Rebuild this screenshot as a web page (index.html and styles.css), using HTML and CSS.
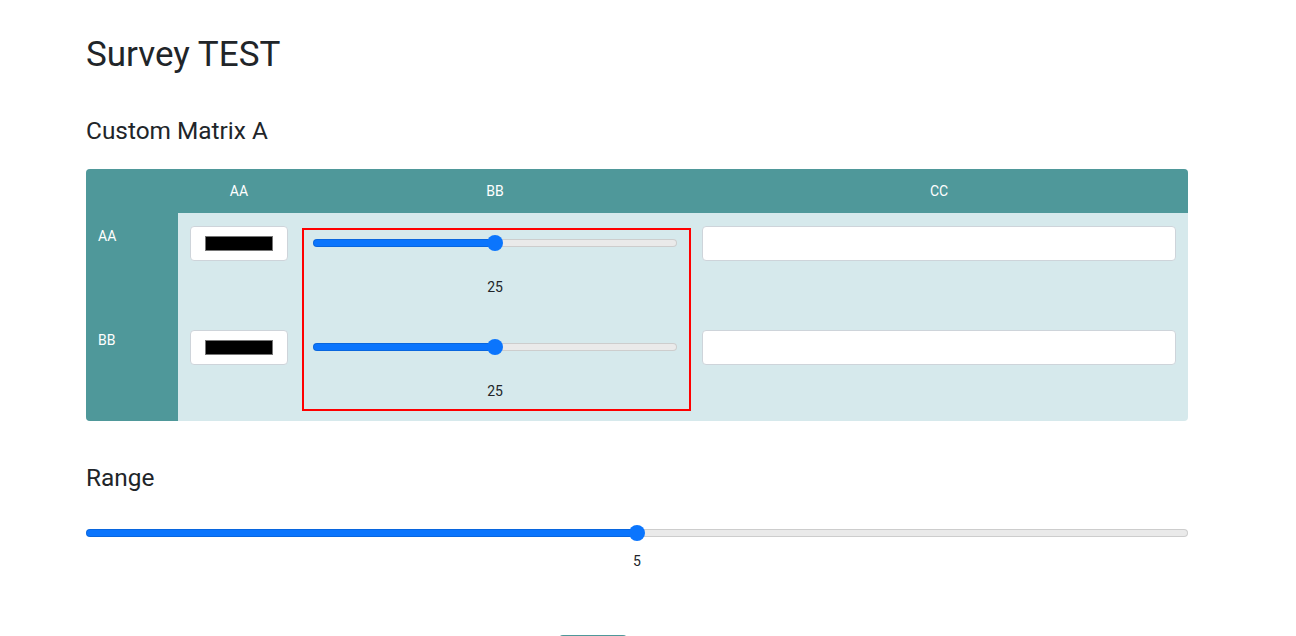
FILE: index.html
```html
<!DOCTYPE html>
<html lang="en">
<head>
<meta charset="utf-8">
<title>Survey TEST</title>
<link rel="stylesheet" href="styles.css">
</head>
<body>
<div class="page">
  <h1 class="title">Survey TEST</h1>

  <h2 class="question-title">Custom Matrix A</h2>
  <div class="matrix">
    <div class="mh corner"></div>
    <div class="mh">AA</div>
    <div class="mh">BB</div>
    <div class="mh">CC</div>

    <div class="row-label">AA</div>
    <div class="cell">
      <input class="color-input" type="color" value="#000000">
    </div>
    <div class="highlight">
      <div class="slider-cell">
        <input class="slider slider-cell-range" type="range" min="0" max="50" value="25" style="--p:50%">
        <div class="slider-value">25</div>
      </div>
      <div class="slider-cell">
        <input class="slider slider-cell-range" type="range" min="0" max="50" value="25" style="--p:50%">
        <div class="slider-value">25</div>
      </div>
    </div>
    <div class="cell">
      <input class="text-input" type="text">
    </div>

    <div class="row-label">BB</div>
    <div class="cell">
      <input class="color-input" type="color" value="#000000">
    </div>
    <div class="cell">
      <input class="text-input" type="text">
    </div>
  </div>

  <h2 class="question-title range-title">Range</h2>
  <input class="slider range-full" type="range" min="0" max="10" value="5" style="--p:50%">
  <div class="range-value">5</div>

  <div class="actions">
    <button class="btn" type="button">Complete</button>
  </div>
</div>
</body>
</html>
```

FILE: styles.css
```css
html {
  overflow-y: scroll;
}

html, body {
  margin: 0;
  padding: 0;
  background: #ffffff;
}

::-webkit-scrollbar {
  width: 15px;
  background: #f1f1f1;
}

::-webkit-scrollbar-track {
  background: #f1f1f1;
}

::-webkit-scrollbar-thumb {
  background: #bcbcbc;
  border: 2px solid #f1f1f1;
  border-top-width: 0;
  border-bottom-width: 0;
  min-height: 40px;
}

::-webkit-scrollbar-button:single-button {
  display: block;
  height: 17px;
  background-color: #f1f1f1;
  background-repeat: no-repeat;
}

::-webkit-scrollbar-button:single-button:vertical:decrement {
  background-image:
    linear-gradient(to top right, transparent 50%, #505050 50%),
    linear-gradient(to top left, transparent 50%, #505050 50%);
  background-size: 4px 4px, 4px 4px;
  background-position: 3.5px 6px, 7.5px 6px;
}

::-webkit-scrollbar-button:single-button:vertical:increment {
  background-image:
    linear-gradient(to bottom right, transparent 50%, #505050 50%),
    linear-gradient(to bottom left, transparent 50%, #505050 50%);
  background-size: 4px 4px, 4px 4px;
  background-position: 3.5px 7px, 7.5px 7px;
}

body {
  font-family: Roboto, "Liberation Sans", Arial, sans-serif;
  font-size: 14px;
  line-height: 21px;
  color: #212529;
}

.page {
  width: 1102px;
  margin-left: 86px;
  min-height: 1300px;
  box-sizing: border-box;
  padding-top: 33px;
}

.title {
  margin: 0;
  font-size: 35px;
  line-height: 43px;
  font-weight: 400;
  color: #212529;
}

.question-title {
  margin: 40px 0 0;
  font-size: 24.4px;
  line-height: 29px;
  font-weight: 400;
  color: #212529;
}

/* Matrix */
.matrix {
  margin-top: 24px;
  display: grid;
  grid-template-columns: 92px 122px 390px 1fr;
  grid-template-rows: 44px 104px 104px;
  background: #d6e9ec;
  border-radius: 4px;
  overflow: hidden;
}

.mh {
  background: #4f989a;
  color: #ffffff;
  display: flex;
  align-items: center;
  justify-content: center;
  font-size: 14px;
}

.row-label {
  background: #4f989a;
  color: #ffffff;
  padding: 13px 12px 0;
}

.cell {
  padding: 13px 12px 0;
}

.highlight {
  grid-column: 3;
  grid-row: 2 / 4;
  margin: 15px -1px 10px 2px;
  border: 2px solid #ff0000;
}

.slider-cell {
  height: 104px;
  padding: 5px 0 0 9px;
  box-sizing: border-box;
}

.slider-cell:last-child {
  height: auto;
}

.slider-value {
  width: 364px;
  margin-top: 26px;
  text-align: center;
}

.color-input {
  -webkit-appearance: none;
  appearance: none;
  display: block;
  width: 98px;
  height: 35px;
  box-sizing: border-box;
  padding: 9px 14px;
  margin: 0;
  background: #ffffff;
  border: 1px solid #ced4da;
  border-radius: 4px;
}

.color-input::-webkit-color-swatch-wrapper {
  padding: 0;
}

.color-input::-webkit-color-swatch {
  border: 1px solid #767676;
  border-radius: 0;
}

.text-input {
  display: block;
  width: 100%;
  height: 35px;
  box-sizing: border-box;
  margin: 0;
  padding: 6px 12px;
  background: #ffffff;
  border: 1px solid #ced4da;
  border-radius: 4px;
  font: inherit;
  outline: none;
}

/* Sliders */
.slider {
  -webkit-appearance: none;
  appearance: none;
  display: block;
  height: 16px;
  margin: 0;
  padding: 0;
  background: transparent;
}

.slider-cell-range {
  width: 364px;
}

.range-title {
  margin-top: 42px;
}

.range-full {
  width: 1102px;
  margin-top: 33px;
}

.slider::-webkit-slider-runnable-track {
  height: 8px;
  border-radius: 4px;
  background: linear-gradient(to right, #0b75fd var(--p), #eaeaea var(--p));
  box-shadow: inset 0 0 0 1px rgba(0, 0, 0, 0.12);
}

.slider::-webkit-slider-thumb {
  -webkit-appearance: none;
  appearance: none;
  width: 16px;
  height: 16px;
  margin-top: -4px;
  border: none;
  border-radius: 50%;
  background: #0b75fd;
}

.range-value {
  margin-top: 10px;
  text-align: center;
}

.actions {
  margin-top: 63px;
  padding-left: 473px;
}

.btn {
  width: 68px;
  height: 38px;
  border: none;
  border-radius: 4px;
  background: #4f989a;
  color: #ffffff;
  font: inherit;
}
```
